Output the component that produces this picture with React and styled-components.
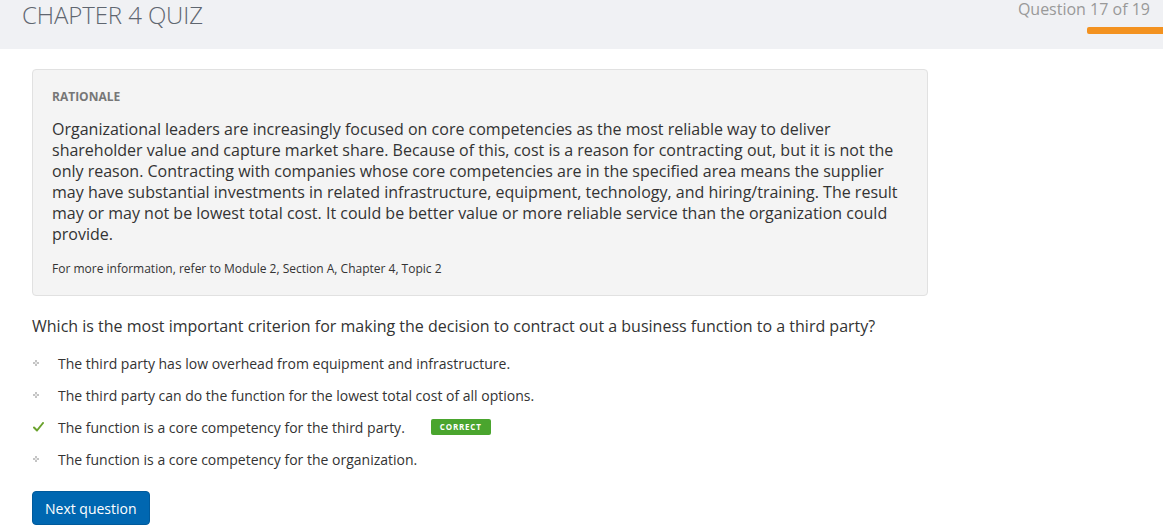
import React from "react";
import styled, { createGlobalStyle } from "styled-components";

const GlobalStyle = createGlobalStyle`
  html, body {
    margin: 0;
    padding: 0;
    background: #ffffff;
    font-family: "Open Sans", "Liberation Sans", sans-serif;
    color: #333;
  }
`;

const options = [
  { text: "The third party has low overhead from equipment and infrastructure." },
  { text: "The third party can do the function for the lowest total cost of all options." },
  { text: "The function is a core competency for the third party.", correct: true },
  { text: "The function is a core competency for the organization." },
];

function Bullet() {
  return (
    <svg width="6" height="6" viewBox="0 0 6 6">
      <rect x="2" y="0" width="2" height="2" fill="#c4c4c4" />
      <rect x="0" y="2" width="2" height="2" fill="#c4c4c4" />
      <rect x="4" y="2" width="2" height="2" fill="#c4c4c4" />
      <rect x="2" y="4" width="2" height="2" fill="#c4c4c4" />
      <rect x="2" y="2" width="2" height="2" fill="#e6e6e6" />
    </svg>
  );
}

function Check() {
  return (
    <svg width="11" height="10" viewBox="0 0 11 10">
      <path d="M1 5.5 L4 8.5 L10 1" stroke="#6aa22c" strokeWidth="2" fill="none" strokeLinecap="round" strokeLinejoin="round" />
    </svg>
  );
}

export default function App() {
  return (
    <>
      <GlobalStyle />
      <Header>
        <Title>CHAPTER 4 QUIZ</Title>
        <Progress>
          <Counter>Question 17 of 19</Counter>
          <ProgressBar />
        </Progress>
      </Header>
      <Main>
        <Rationale>
          <RationaleLabel>RATIONALE</RationaleLabel>
          <RationaleText>
            Organizational leaders are increasingly focused on core competencies as the most reliable way to deliver
            shareholder value and capture market share. Because of this, cost is a reason for contracting out, but it is not the
            only reason. Contracting with companies whose core competencies are in the specified area means the supplier
            may have substantial investments in related infrastructure, equipment, technology, and hiring/training. The result
            may or may not be lowest total cost. It could be better value or more reliable service than the organization could
            provide.
          </RationaleText>
          <Reference>For more information, refer to Module 2, Section A, Chapter 4, Topic 2</Reference>
        </Rationale>
        <Question>
          Which is the most important criterion for making the decision to contract out a business function to a third party?
        </Question>
        <OptionList>
          {options.map((o, i) => (
            <Option key={i}>
              <Marker>{o.correct ? <Check /> : <Bullet />}</Marker>
              <span>{o.text}</span>
              {o.correct && <Badge>CORRECT</Badge>}
            </Option>
          ))}
        </OptionList>
        <NextButton>Next question</NextButton>
      </Main>
    </>
  );
}

const Header = styled.header`
  height: 49px;
  background: #f0f1f4;
  display: flex;
  justify-content: space-between;
  align-items: flex-start;
`;

const Title = styled.h1`
  margin: 0;
  padding: 0 0 0 22px;
  font-size: 24px;
  font-weight: 300;
  line-height: 30px;
  color: #5f6670;
  letter-spacing: -0.1px;
`;

const Progress = styled.div`
  display: flex;
  flex-direction: column;
  align-items: flex-end;
`;

const Counter = styled.div`
  font-size: 16px;
  line-height: 19px;
  color: #999;
  padding-right: 13px;
`;

const ProgressBar = styled.div`
  margin-top: 8px;
  width: 76px;
  height: 7px;
  background: #f39220;
  border-radius: 2px 0 0 2px;
`;

const Main = styled.main`
  padding: 20px 32px 0 32px;
  width: 896px;
`;

const Rationale = styled.section`
  background: #f4f4f4;
  border: 1px solid #e1e1e1;
  border-radius: 4px;
  padding: 19px 19px 18px 19px;
`;

const RationaleLabel = styled.div`
  font-size: 12px;
  font-weight: 700;
  color: #777;
  line-height: 16px;
  margin-bottom: 14px;
`;

const RationaleText = styled.p`
  margin: 0 0 16px 0;
  font-size: 16px;
  line-height: 21px;
  color: #333;
`;

const Reference = styled.p`
  margin: 0;
  font-size: 12px;
  line-height: 16px;
  color: #333;
`;

const Question = styled.p`
  margin: 19px 0 10px 0;
  font-size: 16px;
  line-height: 22px;
  color: #333;
`;

const OptionList = styled.ul`
  list-style: none;
  margin: 0;
  padding: 0;
`;

const Option = styled.li`
  display: flex;
  align-items: center;
  height: 32px;
  font-size: 14px;
  color: #333;
`;

const Marker = styled.span`
  width: 25px;
  display: flex;
  align-items: center;
  padding-left: 1px;
`;

const Badge = styled.span`
  margin-left: 26px;
  background: #4aa52e;
  color: #fff;
  font-size: 8px;
  font-weight: 700;
  letter-spacing: 0.8px;
  border-radius: 2px;
  padding: 2px 9px;
  line-height: 12px;
`;

const NextButton = styled.button`
  margin-top: 16px;
  background: #0067b1;
  color: #fff;
  border: 1px solid #005a9c;
  border-radius: 4px;
  font-family: "Open Sans", "Liberation Sans", sans-serif;
  font-size: 14px;
  height: 34px;
  padding: 0 12px;
  cursor: pointer;
`;
